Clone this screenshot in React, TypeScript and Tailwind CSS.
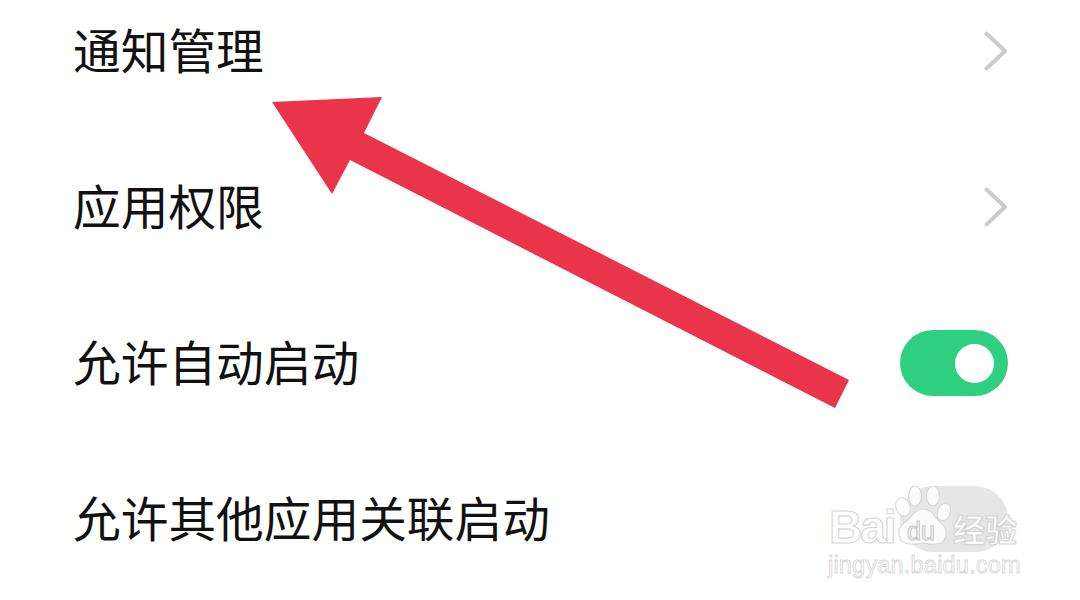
import React from "react";

function Chevron() {
  return (
    <svg width="24" height="40" viewBox="0 0 24 40" fill="none" className="block">
      <path d="M2.5 2.5 L21 20 L2.5 37.5" stroke="#cbcbcb" strokeWidth="4" strokeLinecap="round" strokeLinejoin="round" />
    </svg>
  );
}

function Toggle({ on }: { on: boolean }) {
  return (
    <div className={`flex h-[66px] w-[108px] items-center rounded-full px-[14px] ${on ? "justify-end bg-[#2fd081]" : "justify-start bg-[#e6e6e6]"}`}>
      <div className={`h-[39px] w-[39px] rounded-full ${on ? "bg-white" : "bg-[#e9e9e9]"}`} />
    </div>
  );
}

function Row({ label, children }: { label: string; children: React.ReactNode }) {
  return (
    <div className="flex h-[156px] items-center justify-between pl-[73px] pr-[72px]">
      <span className="pb-[4px] text-[47.7px] leading-none text-[#111] font-['Noto_Sans_CJK_SC',sans-serif]">{label}</span>
      {children}
    </div>
  );
}

function Watermark() {
  const stroke = "#d8d8d8";
  return (
    <div className="absolute left-[826px] top-[484px] h-[96px] w-[200px] font-['Liberation_Sans',sans-serif]">
      <span className="absolute left-[3px] top-[20px] text-[46px] leading-[46px] font-bold tracking-[-2px] text-white/90 [-webkit-text-stroke:1.2px_#d8d8d8]">Bai</span>
      <svg className="absolute left-[66px] top-0" width="62" height="64" viewBox="0 0 62 64">
        <g fill="#ffffff" fillOpacity="0.8" stroke={stroke} strokeWidth="1.2">
          <ellipse cx="11" cy="23" rx="7" ry="9.5" transform="rotate(-18 11 23)" />
          <ellipse cx="23" cy="12" rx="6.5" ry="10" />
          <ellipse cx="41" cy="12" rx="6.5" ry="10" />
          <ellipse cx="52" cy="28" rx="6.5" ry="9" transform="rotate(18 52 28)" />
          <path d="M31 25 C40 25 42 33 49 39 C58 46 55 60 43 60 C37 61 35 59 31 59 C27 59 25 61 18 60 C6 60 3 46 12 39 C20 33 22 25 31 25 Z" />
        </g>
      </svg>
      <span className="absolute left-[81px] top-[34px] text-[25px] leading-[26px] text-white/70 [-webkit-text-stroke:1px_#c4c4c4]">du</span>
      <span className="absolute left-[127px] top-[26px] text-[32px] leading-[36px] font-bold text-white/90 [-webkit-text-stroke:1.2px_#d4d4d4] font-['Noto_Sans_CJK_SC',sans-serif]">经验</span>
      <span className="absolute left-[2px] top-[67px] text-[23.5px] leading-[28px] tracking-[0.2px] text-white [-webkit-text-stroke:0.9px_#d8d8d8]">jingyan.baidu.com</span>
    </div>
  );
}

export default function App() {
  return (
    <div className="relative h-[600px] w-[1080px] overflow-hidden bg-white">
      <div className="-mt-[27px] flex flex-col">
        <Row label="通知管理"><Chevron /></Row>
        <Row label="应用权限"><Chevron /></Row>
        <Row label="允许自动启动"><Toggle on /></Row>
        <Row label="允许其他应用关联启动"><Toggle on={false} /></Row>
      </div>
      <svg className="absolute left-0 top-0" width="1080" height="600" viewBox="0 0 1080 600">
        <polygon points="272,102 382,97 364,133 849,380 835,408 350,160 332,194" fill="#ea3449" />
      </svg>
      <Watermark />
    </div>
  );
}
